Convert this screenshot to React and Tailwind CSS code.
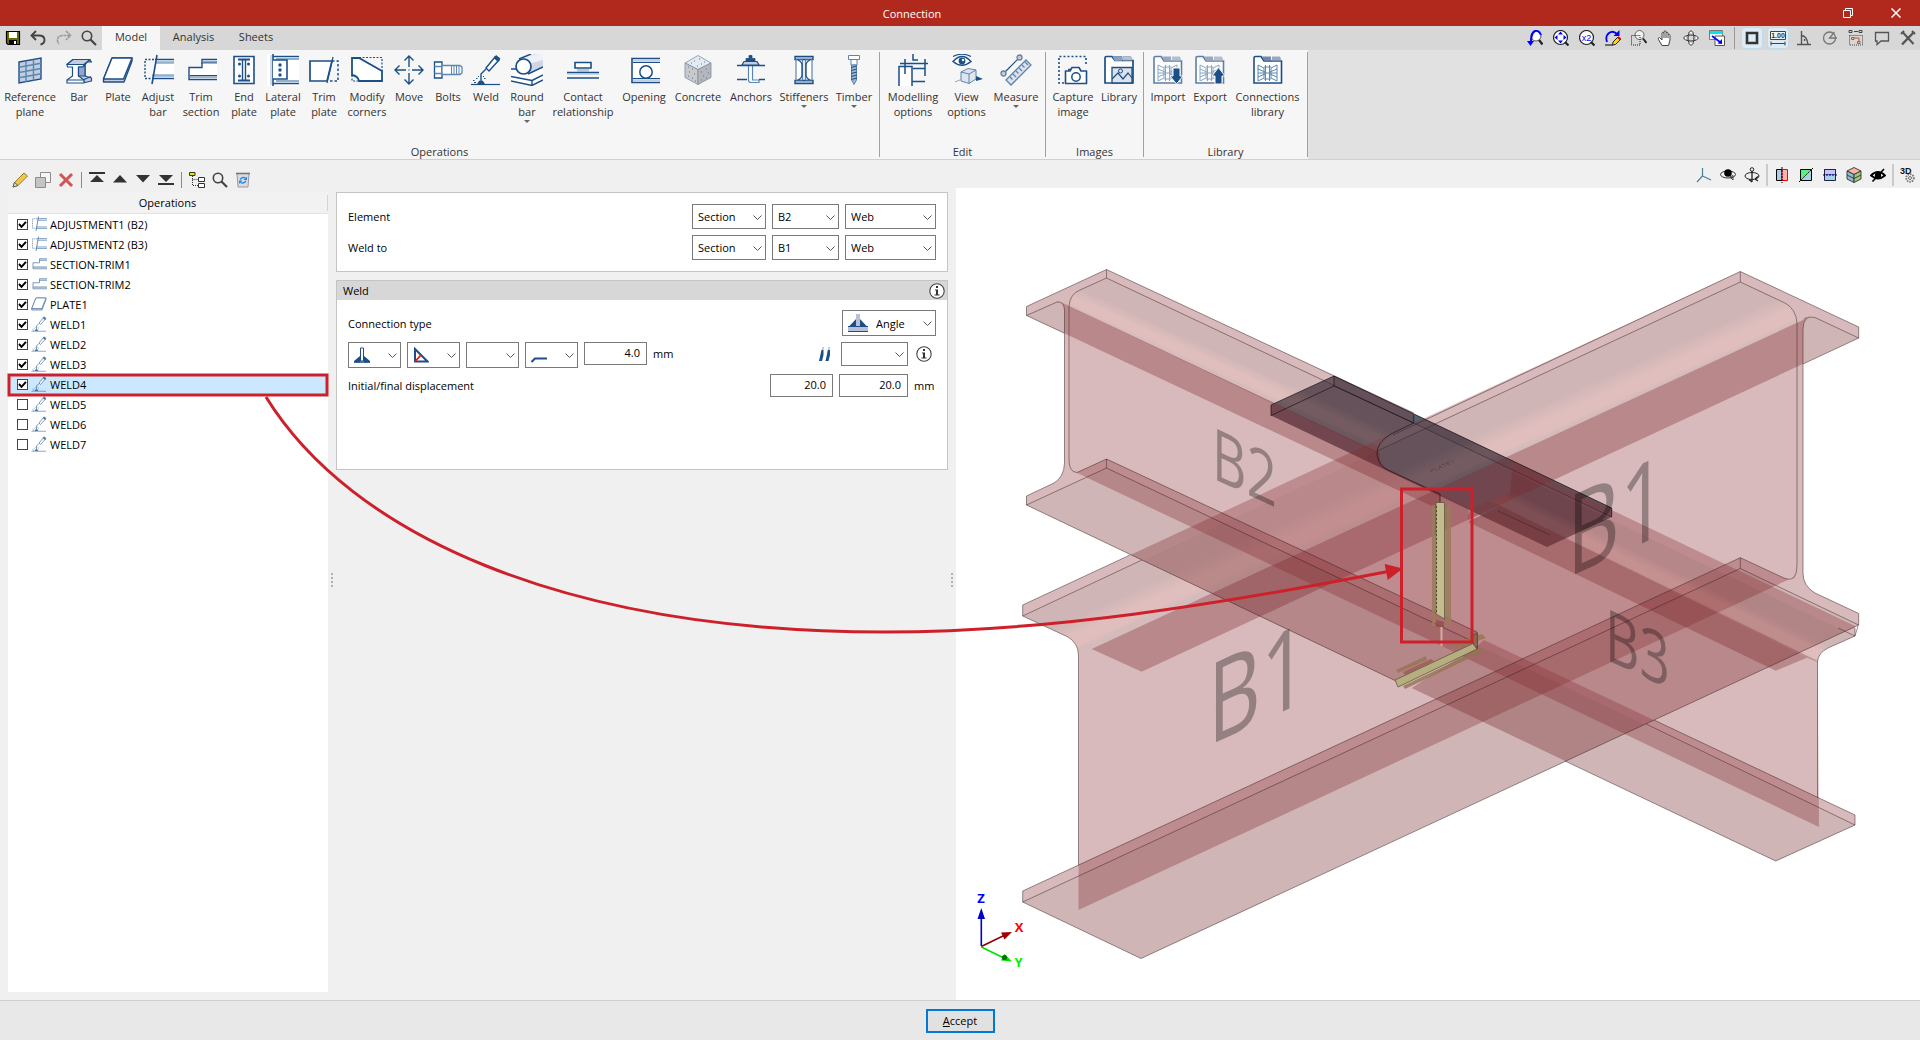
import React from "react";

const NAVY = "#1c4f87";
const MID = "#5b86b0";
const PALE = "#c3cde0";

function Svg({ box = 16, size = "size-4", children, className = "" }) {
  return (
    <svg viewBox={`0 0 ${box} ${box}`} className={`${size} shrink-0 ${className}`} fill="none" aria-hidden="true">
      {children}
    </svg>
  );
}

/* ---------- ribbon drawings, all on a 32 x 32 grid ---------- */

const art = {
  refPlane: (
    <g stroke={MID} strokeWidth="1.4">
      <path d="M5 8 27 4V25L5 29Z" fill={PALE} stroke={NAVY} />
      <path d="M12 7V28M19.500 5.500V26.500M5 13.300 27 9.300M5 18.500 27 14.500M5 23.700 27 19.700" />
    </g>
  ),
  bar: (
    <g stroke={NAVY} strokeWidth="1.200" strokeLinejoin="round">
      <path d="M10 5.500H26L28.500 8H24L22 11V22L28.500 24V27L22 28.500 15 22V13Z" fill={PALE} />
      <path d="M4 10.500 10 5.500H27L21 10.500 20 13H15.500V22L21 26V29H4V26L9.500 22V13H4.500Z" fill="#fff" />
      <path d="M10 5.500H27L21 10.500H4Z" fill={PALE} />
      <path d="M15.500 13H20L22 10V22L15.500 22Z" fill="#93a8c8" />
      <path d="M4 26H20M20 26 28 22.500" />
    </g>
  ),
  plate: (
    <g stroke={NAVY} strokeWidth="1.400" strokeLinejoin="round">
      <path d="M1.500 25 10 4H30V7L22 28H1.500Z" fill={PALE} />
      <path d="M1.500 25 10 4H30L21.500 25Z" fill="#fff" />
    </g>
  ),
  adjust: (
    <g stroke={NAVY}>
      <path d="M13 6H32V26H9Z" fill="#fff" stroke="none" />
      <path d="M13 5.500H32M10 24.500H32" stroke={NAVY} strokeWidth="1.600" />
      <path d="M13 8.500H32M10 21.500H32" stroke="#8fb0cf" strokeWidth="2.500" />
      <path d="M15 1 10 30" strokeWidth="1.600" />
      <path d="M12 5.500H3V24.500H9" strokeDasharray="2 1.500" strokeWidth="1.400" />
    </g>
  ),
  trimSection: (
    <g>
      <path d="M4 14H16V6H32V26H4Z" fill="#fff" />
      <path d="M16 9H32M4 23H32" stroke="#9db9d6" strokeWidth="2" />
      <path d="M32 5.500H17V13.500H4V25.500H32" stroke={NAVY} strokeWidth="1.400" />
      <path d="M18 8H32M5 21.500H32" stroke={NAVY} strokeWidth="1" />
    </g>
  ),
  endPlate: (
    <g stroke={NAVY}>
      <path d="M6 2.500H26V29.500H6Z" fill="#fff" strokeWidth="1.600" />
      <path d="M10 5.500H22M10 26.500H22" strokeWidth="2" />
      <path d="M14.500 6V26M17.500 6V26" strokeWidth="1.400" />
      <g fill={NAVY} stroke="none">
        <circle cx="11.500" cy="10" r="1.500" /><circle cx="20.500" cy="10" r="1.500" />
        <circle cx="11.500" cy="22" r="1.500" /><circle cx="20.500" cy="22" r="1.500" />
      </g>
    </g>
  ),
  lateral: (
    <g stroke={NAVY}>
      <path d="M0 0H32V32H0Z" fill="#fff" stroke="none" />
      <path d="M6 0V32" strokeWidth="1.600" />
      <path d="M4 1V31" stroke="#9db9d6" />
      <path d="M6 2.500H32M6 29.500H32" strokeWidth="1.600" />
      <path d="M9 5H32M9 27H32" stroke="#8fb0cf" strokeWidth="2" />
      <path d="M6 6H20V25H6" fill="#fff" strokeWidth="1.600" />
      <g fill={NAVY} stroke="none"><circle cx="13" cy="11" r="1.700" /><circle cx="13" cy="16" r="1.700" /><circle cx="13" cy="21" r="1.700" /></g>
    </g>
  ),
  trimPlate: (
    <g stroke={NAVY}>
      <path d="M2 7H24L19 27H2Z" fill="#fff" strokeWidth="1.700" />
      <path d="M25 3 19 29" strokeWidth="1.200" />
      <path d="M24 7H30V27H21" strokeDasharray="2.500 2" strokeWidth="1.500" />
    </g>
  ),
  corners: (
    <g stroke={NAVY}>
      <path d="M1 4H8L31 17V27H8Q7 22 1 21Z" fill="#fff" strokeWidth="1.800" />
      <path d="M8 3.500H31V17M1 21V27H8" strokeDasharray="2 1.500" strokeWidth="1.200" />
    </g>
  ),
  move: (
    <g stroke={NAVY} strokeWidth="1.400">
      <path d="M16 2V13M16 19V30M2 16H13M19 16H30M11.500 6.500 16 2 20.500 6.500M11.500 25.500 16 30 20.500 25.500M6.500 11.500 2 16 6.500 20.500M25.500 11.500 30 16 25.500 20.500" />
      <path d="M16 15V17M15 16H17" stroke="#9db9d6" />
    </g>
  ),
  bolts: (
    <g stroke={NAVY} strokeWidth="1.300">
      <path d="M2.500 8H10V24H2.500Z" fill="#fff" />
      <path d="M2.500 12.500H10M2.500 19.500H10" stroke={MID} />
      <path d="M10 11.500H28L30 13V19L28 20.500H10Z" fill="#fff" stroke={MID} />
      <path d="M19.500 12V20M22 12V20M24.500 12V20M27 12V20" stroke={MID} strokeWidth="1" />
    </g>
  ),
  weld: (
    <g stroke={NAVY}>
      <path d="M1 30.500H30" strokeWidth="1.200" />
      <path d="M16 14 25 3 29 6 19 17Z" fill="#fff" strokeWidth="1.400" />
      <path d="M24 4 26 1.500 30 4.500 28 7.500Z" fill={NAVY} strokeWidth=".8" />
      <path d="M16 15 11 20V26" strokeWidth="1.400" />
      <path d="M7 30 9 27 11 26 13 27 15 30Z" fill={NAVY} stroke="none" />
      <path d="M3 26.500H4.500M6 24.500H7.500M14 24.500H15.500M4 28.500H6M8 22.500H9M13 22.500H14" strokeWidth="1.200" />
    </g>
  ),
  roundBar: (
    <g stroke={NAVY} strokeLinejoin="round">
      <path d="M0 15H32L32 25 21 31 0 27Z" fill="#fff" stroke="none" />
      <path d="M10 5 24 0H32V14L16 20Z" fill="#cfd6e4" stroke="none" />
      <path d="M14 3 28 0H32V6L18 10Z" fill="#eef1f7" stroke="none" />
      <path d="M8 5 20 0M17 20 32 13" strokeWidth="1.400" />
      <circle cx="12.500" cy="12.500" r="7.500" fill="#fff" strokeWidth="1.700" />
      <path d="M0 15H5M0 22.500 21 26.500 32 21M0 27 21 31.500 32 26M21 26.500V31" strokeWidth="1.400" />
    </g>
  ),
  contact: (
    <g stroke={NAVY}>
      <path d="M8 8.500H24V14H8Z" fill="#fff" strokeWidth="1.600" />
      <path d="M11 15V17.500M13 15V17.500M15 15V17.500M17 15V17.500M19 15V17.500M21 15V17.500" stroke={MID} strokeWidth=".8" />
      <path d="M0 18.500H32M0 24H32" strokeWidth="1.600" />
      <path d="M0 20H32" stroke="#9db9d6" strokeWidth="1" />
    </g>
  ),
  opening: (
    <g stroke={NAVY}>
      <path d="M4 4.500H32V28.500H4Z" fill="#fff" stroke="none" />
      <path d="M32 4.500H4V28.500H32" strokeWidth="1.600" />
      <path d="M5 6.500H32M5 26.500H32" stroke={PALE} strokeWidth="2.500" />
      <path d="M5 8.500H32M5 24.500H32" strokeWidth="1.200" />
      <circle cx="18" cy="18" r="6.200" strokeWidth="1.500" />
    </g>
  ),
  concrete: (
    <g stroke="#7890aa" strokeWidth=".8" strokeLinejoin="round">
      <path d="M16 1.500 29 9 16 15.500 3 9Z" fill="#e4eaf2" />
      <path d="M3 9 16 15.500V30.500L3 23.500Z" fill="#c9c9cc" />
      <path d="M29 9 16 15.500V30.500L29 23.500Z" fill="#b5b6ba" />
      <path d="M6 13h1M10 15h1M7 18h1M12 20h1M6 22h1M10 24h1M13 27h1M19 18h1M24 15h1M21 22h1M26 19h1M19 26h1M24 24h1M12 7h1M17 5h1M19 10h1M22 8h1M9 9h1M15 12h1" stroke="#5d7590" strokeWidth="1" />
    </g>
  ),
  anchors: (
    <g stroke={NAVY}>
      <path d="M13.500 11V26Q13.500 28.500 16 28.500H24V26H17.500V11Z" fill="#fff" stroke={MID} strokeWidth="1.200" />
      <path d="M2 11.500H30M2 25.500H12M24 25.500H30" strokeWidth="1.400" />
      <path d="M7 11 9 7.500H22L24 11Z" fill={PALE} strokeWidth="1.200" />
      <path d="M11 4.500H20V7.500H11ZM14 1.500H17V4H14Z" fill={NAVY} strokeWidth=".8" />
    </g>
  ),
  stiffeners: (
    <g stroke={NAVY}>
      <path d="M7 2.500H25V5.500H7ZM7 26.500H25V29.500H7Z" fill={PALE} strokeWidth="1.400" />
      <path d="M8 6H14.500V26H8ZM17.500 6H24V26H17.500Z" fill="#fff" stroke={MID} strokeWidth="1.200" />
      <path d="M10 6Q14 8 14 11V21Q14 24 10 26M22 6Q18 8 18 11V21Q18 24 22 26" strokeWidth="1.300" />
    </g>
  ),
  timber: (
    <g stroke={MID} strokeWidth="1">
      <path d="M10.500 1.500H21.500V5.500H10.500ZM13 5.500H19V11H13Z" fill="#fff" />
      <path d="M13.500 11H18.500V26L16 30.500 13.500 26Z" fill="#9db4d0" />
      <path d="M13 13.500 19 12M13 16.500 19 15M13 19.500 19 18M13 22.500 19 21M13 25.500 19 24" stroke={NAVY} />
    </g>
  ),
  modelling: (
    <g stroke={NAVY} strokeWidth="1.500">
      <path d="M2 13H15V32H2Z" fill="#fff" stroke="none" />
      <path d="M2 32V12.500H15V32M3 9.500H31M16 14.500H28M15 27.500H28M8 5V20M28 5V22M16 0V6H21" />
    </g>
  ),
  viewOptions: (
    <g stroke={NAVY}>
      <path d="M2 7.500Q11-2.500 20 7.500 11 15 2 7.500Z" fill="#fff" strokeWidth="1.400" />
      <circle cx="11" cy="7" r="3.400" fill={NAVY} stroke="none" /><circle cx="12" cy="6" r="1.200" fill="#fff" stroke="none" />
      <path d="M2 2.500Q11-2 20 2.500" strokeWidth="1.200" />
      <path d="M10 18 17 14.500 25 16V25L18 29.500 10 27Z" fill="#dfe4ee" stroke={MID} strokeWidth="1" />
      <path d="M10 18 18 20 25 16M18 20V29.500" stroke={MID} />
      <path d="M25 22 32 25 25 27Z" fill={NAVY} stroke="none" /><path d="M4 28 10 25.500" stroke="#9aa8b8" />
    </g>
  ),
  measure: (
    <g stroke={MID} strokeWidth="1.300">
      <path d="M6 26 26 6 31 11 11 31Z" fill="#dde2ec" />
      <path d="M10 23 12.500 25.500M13 20 16 23M16 17 18.500 19.500M19 14 22 17M22 11 24.500 13.500M25 8 28 11" />
      <path d="M4.500 18.500 18.500 4.500" stroke={NAVY} strokeWidth="1.200" />
      <circle cx="3.500" cy="19.500" r="2.500" fill={PALE} stroke="#6d8099" /><circle cx="19.500" cy="3.500" r="2.500" fill={PALE} stroke="#6d8099" />
    </g>
  ),
  capture: (
    <g stroke={NAVY}>
      <path d="M7 29H2V2.500H29V12" strokeWidth="1.600" strokeDasharray="2 2" />
      <path d="M8.500 17H13L15 13.500H22L24 17H29.500V29.500H8.500Z" fill="#fff" strokeWidth="1.600" strokeLinejoin="round" />
      <circle cx="19" cy="23" r="4.200" strokeWidth="1.500" />
      <path d="M11 15.500H13" strokeWidth="1.500" />
    </g>
  ),
  library: (
    <g stroke={NAVY}>
      <path d="M2 29V4Q2 2.500 3.500 2.500H9L12 6.500H30V29Z" fill="#fff" strokeWidth="1.700" />
      <path d="M10 2.500H19V6.500H12Z" fill="#8ba0c4" stroke="#7f95bb" /><path d="M20 2.500H27Q29 2.500 29 6H20Z" fill="#b9c2d2" stroke="#a5b0c4" />
      <path d="M9 13.500H29V29H9Z" fill="#dde2ec" strokeWidth="1.300" />
      <path d="M9 25 15 19 20 25 25 19 29 24" strokeWidth="1.200" /><circle cx="17.500" cy="17" r="2" />
    </g>
  ),
  folder: (
    <g>
      <path d="M2 29V4Q2 2.500 3.500 2.500H9L12 7H29.500V29Z" fill="#fff" stroke={NAVY} strokeWidth="1.600" />
      <path d="M10 2.500H19V6.500H12Z" fill="#7387ad" /><path d="M20 2.500H27Q29 2.500 29 6.500H20Z" fill="#9aa7c0" />
      <path d="M6 11 12 14V24L6 27ZM25 11 19 14V24L25 27ZM6 19H25M13.500 11V27M17.500 11V27M6 15 13 18M6 23 13 20M25 15 18 18M25 23 18 20M12 13H19M12 25H19" stroke={MID} strokeWidth="1" />
    </g>
  ),
};
art.importLib = (
  <g>
    <g opacity=".7">{art.folder}</g>
    <path d="M21 14H28V22H31L24.500 30 18 22H21Z" fill={NAVY} stroke="#f6f6f6" />
  </g>
);
art.exportLib = (
  <g>
    <g opacity=".7">{art.folder}</g>
    <path d="M21 30H28V22H31L24.500 13.500 18 22H21Z" fill={NAVY} stroke="#f6f6f6" />
  </g>
);

const groups = [
  {
    name: "Operations",
    items: [
      ["refPlane", "Reference", "plane", "w-[60px]"],
      ["bar", "Bar", "", "w-[38px]"],
      ["plate", "Plate", "", "w-[40px]"],
      ["adjust", "Adjust", "bar", "w-[40px]"],
      ["trimSection", "Trim", "section", "w-[46px]"],
      ["endPlate", "End", "plate", "w-[40px]"],
      ["lateral", "Lateral", "plate", "w-[38px]"],
      ["trimPlate", "Trim", "plate", "w-[44px]"],
      ["corners", "Modify", "corners", "w-[42px]"],
      ["move", "Move", "", "w-[42px]"],
      ["bolts", "Bolts", "", "w-[36px]"],
      ["weld", "Weld", "", "w-[40px]"],
      ["roundBar", "Round", "bar", "w-[42px]", true],
      ["contact", "Contact", "relationship", "w-[70px]"],
      ["opening", "Opening", "", "w-[52px]"],
      ["concrete", "Concrete", "", "w-[56px]"],
      ["anchors", "Anchors", "", "w-[50px]"],
      ["stiffeners", "Stiffeners", "", "w-[56px]", true],
      ["timber", "Timber", "", "w-[44px] mr-[3px]", true],
    ],
  },
  {
    name: "Edit",
    items: [
      ["modelling", "Modelling", "options", "w-[66px]"],
      ["viewOptions", "View", "options", "w-[41px]"],
      ["measure", "Measure", "", "w-[58px]", true],
    ],
  },
  {
    name: "Images",
    items: [
      ["capture", "Capture", "image", "w-[54px]"],
      ["library", "Library", "", "w-[38px] mr-[5px]"],
    ],
  },
  {
    name: "Library",
    items: [
      ["importLib", "Import", "", "w-[48px]"],
      ["exportLib", "Export", "", "w-[36px]"],
      ["folder", "Connections", "library", "w-[79px]"],
    ],
  },
];

function Ribbon() {
  return (
    <div className="flex h-[110px] border-b border-[#d0d0d0] bg-[#e1e1e1]">
      {groups.map((g) => (
        <section key={g.name} aria-label={g.name} className="flex flex-col bg-[#f6f6f6]">
          <div className="mt-0.5 flex h-[105px] flex-col justify-between border-r border-[#a0a0a0]">
            <div className="flex pt-0.5">
              {g.items.map(([icon, a, b, w, menu]) => (
                <button key={icon} type="button" className={`flex ${w} flex-col items-center whitespace-nowrap leading-[15px]`}>
                  <Svg box={32} size="size-8" className="mb-[3px]">{art[icon]}</Svg>
                  <span>{a}</span>
                  {b && <span>{b}</span>}
                  {menu && <span className="mt-px border-x-[3px] border-t-[3px] border-x-transparent border-t-[#666]" />}
                </button>
              ))}
            </div>
            <div className="text-center leading-[10px]">{g.name}</div>
          </div>
        </section>
      ))}
    </div>
  );
}

/* ---------- small tool icons ---------- */

const lens = (
  <g>
    <circle cx="7.500" cy="7.500" r="7" fill="#fff" stroke="#222" strokeWidth="1.200" />
    <path d="M12 12 15.500 15.500" stroke="#222" strokeWidth="2.200" />
  </g>
);
const searchArt = (
  <g stroke="#444">
    <circle cx="6" cy="6" r="4.700" strokeWidth="1.600" />
    <path d="M9.500 9.500 15 15" strokeWidth="2.200" />
  </g>
);

const quick = [
  ["Save", <g key="a"><path d="M1.500 1.500H14.500V14.500H3L1.500 13Z" fill="#6b6b00" stroke="#000" strokeWidth="1.200" /><path d="M4 2H12V8H4Z" fill="#fff" /><path d="M4 10H12V14H4Z" fill="#000" /><path d="M9 11H11V14H9Z" fill="#fff" /></g>],
  ["Undo", <path key="a" d="M6 1 1.500 5.500 6 10M2 5.500H9Q14.500 5.500 14.500 10 14.500 13.500 10.500 14.500" stroke="#444" strokeWidth="1.900" />],
  ["Redo", <path key="a" d="M10 1 14.500 5.500 10 10M14 5.500H7Q1.500 5.500 1.500 10 1.500 12.500 3 14" stroke="#9c9c9c" strokeWidth="1.700" strokeDasharray="3 .6" />],
  ["Find", searchArt],
];

const viewTools = [
  ["Previous view", <g key="a"><circle cx="9" cy="6" r="5" fill="#fff" stroke="#555" /><path d="M12 10 15.500 14.500" stroke="#222" strokeWidth="2.200" /><path d="M14 5Q12 0 8 1 4 3 4 12" stroke="#00f" strokeWidth="2" /><path d="M0 11H7L3.500 16Z" fill="#00f" /></g>],
  ["Zoom all", <g key="a">{lens}<path d="M7.500 1.500 10 4.500H5ZM7.500 13.500 10 10.500H5ZM1.500 7.500 4.500 5V10ZM13.500 7.500 10.500 5V10Z" fill="#00f" /></g>],
  ["Zoom x2", <g key="a">{lens}<text x="7.500" y="10.500" textAnchor="middle" fontSize="9" fill="#00f" fontFamily="Liberation Sans, sans-serif">x2</text></g>],
  ["Redraw", <g key="a"><path d="M2 12Q0 6 4 3 8 0 12 4" stroke="#00f" strokeWidth="1.800" /><path d="M14.500 0V6H8.500Z" fill="#00f" /><path d="M0 15H8" stroke="#000" /><path d="M8 12 13 7 15.500 9.500 10.500 14.500 7.500 15Z" fill="#ffd800" stroke="#222" /><path d="M13 7 15.500 9.500" stroke="#c00" strokeWidth="2" /></g>],
  ["Zoom window", <g key="a"><circle cx="8.500" cy="5" r="4.500" fill="#f2f2f2" stroke="#666" /><path d="M12 8.500 15.500 13" stroke="#222" strokeWidth="2" /><path d="M.5 5.500H9V15H.5Z" stroke="#00f" strokeDasharray="1 1" /></g>],
  ["Pan", <path key="a" d="M5 15.500 1.500 9.500Q.5 8 2.500 7.500L5 10V3Q5.500 1.500 7 3V1.500Q8 0 9 1.500V2.500Q10.500 1.500 11 3V4.500Q12.500 3.500 13 5.500V10L11.500 15.500ZM7 3V8M9 2.500V8M11 4.500V8" fill="#fff" stroke="#444" strokeWidth="1" />],
  ["Orbit", <g key="a" stroke="#333"><ellipse cx="8" cy="8" rx="6.500" ry="3" /><ellipse cx="8" cy="8" rx="3" ry="6.500" /><path d="M5.500 3 8 .5 10.500 3M5.500 13 8 15.500 10.500 13M3 5.500.5 8 3 10.500M13 5.500 15.500 8 13 10.500" fill="#fff" /></g>],
  ["Views", <g key="a"><path d="M.5.5H13.500V9.500H.5Z" fill="#fff" stroke="#777" /><path d="M1 1H13.500V4H1Z" fill="#00e5ee" /><path d="M6 6H15.500V15.500H6Z" fill="#fff" stroke="#555" /><path d="M3 6 11 12" stroke="#00f" strokeWidth="1.600" /><path d="M13 14V9L8.500 13.500Z" fill="#00f" /></g>],
];

const drawTools = [
  ["Frame", <path key="a" d="M3 3H13V13H3Z" stroke="#333" strokeWidth="2.600" />, true],
  ["Units", <g key="a" stroke="#444"><path d="M.5 1.500H15.500V9.500H.5Z" fill="#f4f4f4" /><text x="8" y="8" textAnchor="middle" fontSize="7" fontWeight="700" fill="#333" stroke="none" fontFamily="Liberation Sans, sans-serif">1.00</text><path d="M1 13.500H15M1 11.500V15.500M15 11.500V15.500" /></g>, true],
  ["Right angle", <path key="a" d="M1 14.500H15M5.500 1V14.500M5.500 5.500Q11 6 12 14.500M8.500 9V11" stroke="#555" strokeWidth="1.400" />],
  ["Polar", <g key="a" stroke="#777" strokeWidth="1.300"><circle cx="7.500" cy="8" r="6" /><path d="M15 8H7.500L12.500 2" /></g>],
  ["Object snap", <g key="a" stroke="#444"><path d="M1 .5H4V2.500H1ZM6 1.500H10M11 .5H14V2.500H11Z" /><path d="M1.500 5.500H14.500V15H1.500Z" strokeDasharray="1 1" /><path d="M3.500 7.500H6V9.500H3.500ZM6 8H11V11M9.500 11.500H12V13.500H9.500Z" stroke="#c8501e" /></g>],
  ["Comment", <path key="a" d="M1.500 2.500H14.500V11H7L3 14.500V11H1.500Z" stroke="#555" strokeWidth="1.300" />],
  ["Settings", <g key="a"><path d="M2 14.500 13.500 2.500" stroke="#555" strokeWidth="2.400" /><path d="M2.500 2 13.500 14" stroke="#555" strokeWidth="2" /><path d="M12 1 15 4M1 4 4 1" stroke="#555" strokeWidth="2" /></g>],
];

const listTools = [
  [
    ["Edit", <g key="a" strokeWidth=".9"><path d="M1 15 2.500 10.500 12 1 15.500 4 6 13.500Z" fill="#f2c744" stroke="#8a6d2a" /><path d="M1 15 2.500 10.500 6 13.500Z" fill="#e9e1d0" stroke="#555" /></g>],
    ["Copy", <g key="a" stroke="#8c8c8c"><path d="M5.500.5H15.500V10.500H5.500Z" fill="#f6f6f6" /><path d="M.5 5.500H10.500V15.500H.5Z" fill="#c4c4c4" /></g>],
    ["Delete", <path key="a" d="M2 2 14 14M14 2 2 14" stroke="#d25353" strokeWidth="3" />],
  ],
  [
    ["Move to top", <g key="a" fill="#333"><path d="M0 0H16V2H0ZM8 3 15 10H1Z" /></g>],
    ["Move up", <path key="a" d="M8 3 15 10.500H1Z" fill="#333" />],
    ["Move down", <path key="a" d="M8 10.500 15 3H1Z" fill="#333" />],
    ["Move to bottom", <g key="a" fill="#333"><path d="M0 11H16V13H0ZM8 10 15 3H1Z" /></g>],
  ],
  [
    ["Tree", <g key="a" stroke="#333"><path d="M3.500 4V13.500H9M3.500 7.500H9" strokeDasharray="1 1" /><path d="M.5.500H6V3.500H.5Z" fill="#e8e800" /><path d="M9.500 5.500H15.500V9.500H9.500ZM9.500 11.500H15.500V15.500H9.500Z" fill="#fff" /></g>],
    ["Search", searchArt],
    ["Purge", <g key="a"><path d="M2 1.500H14L13 15H3Z" fill="#dcdcdc" stroke="#999" /><path d="M1 1.500H15" stroke="#777" strokeWidth="1.600" /><path d="M5 7.500Q8 4 10.500 6.500M11 9Q8 12.500 5.500 10" stroke="#1e88ff" strokeWidth="1.300" /><path d="M12 4.500V8H8.500ZM4 12V8.500H7.500Z" fill="#1e88ff" /></g>],
  ],
];

const sceneTools = [
  [
    ["Axes", <path key="a" d="M6.500 1V9L1 15M6.500 9 15 13" stroke="#4c8096" strokeWidth="1.200" />],
    ["Look", <g key="a" stroke="#333"><ellipse cx="8" cy="7.500" rx="7.500" ry="3.500" /><circle cx="8" cy="6" r="3.800" fill="#000" stroke="none" /><path d="M10 10 13 8.500V13M10 10 13 13" strokeWidth=".9" /></g>],
    ["Turn", <g key="a" stroke="#222"><ellipse cx="8" cy="9" rx="7" ry="3.500" /><path d="M8 4V15M5 12.500 8 15M11 12 14 9.500M11 12 14 14" strokeWidth="1.300" /><circle cx="8" cy="2.500" r="1.800" /></g>],
  ],
  [
    ["Section X", <g key="a"><path d="M2.500 2.500H8V13.500H2.500Z" fill="#a8d0e6" stroke="#000" /><path d="M8 2.500H13.500V13.500H8Z" fill="#ffb0b0" stroke="#f00" /><path d="M8 0V16" stroke="#000" strokeDasharray="2 1" /></g>],
    ["Section Y", <g key="a"><path d="M2.500 2.500H13.500V13.500H2.500Z" fill="#a8d0e6" /><path d="M2.500 2.500H13.500L2.500 13.500Z" fill="#5cf07a" /><path d="M2.500 2.500H13.500V13.500H2.500Z" stroke="#000" /><path d="M1 15 15 1" stroke="#000" strokeDasharray="2 1" /></g>],
    ["Section Z", <g key="a"><path d="M2.500 2.500H13.500V8H2.500Z" fill="#c4c4ff" stroke="#00a" /><path d="M2.500 8H13.500V13.500H2.500Z" fill="#a8d0e6" /><path d="M2.500 2.500H13.500V13.500H2.500Z" stroke="#224" /><path d="M1 8H15" stroke="#000" strokeDasharray="2 1" /></g>],
    ["Layers", <g key="a" stroke="#333" strokeWidth=".9"><path d="M8 .5 15 4 8 7.500 1 4Z" fill="#f7b5a5" /><path d="M1 4 8 7.500V15.500L1 12Z" fill="#8dbbd0" /><path d="M15 4 8 7.500V15.500L15 12Z" fill="#9fc77a" /><path d="M1 8 8 11.500 15 8" /></g>],
    ["Hide", <g key="a"><path d="M1 8.500Q8 1.500 15 8.500 8 14.500 1 8.500Z" fill="#fff" stroke="#000" strokeWidth="1.800" /><circle cx="8" cy="8.500" r="3.200" fill="#000" /><path d="M2.500 14.500 14 2" stroke="#000" strokeWidth="1.600" /></g>],
  ],
  [
    ["3D settings", <g key="a"><circle cx="10" cy="11" r="3.800" fill="#eee" stroke="#777" strokeWidth="1.800" strokeDasharray="1.500 1" /><circle cx="10" cy="11" r="1.500" stroke="#777" /><text x="0" y="6.500" fontSize="9" fontWeight="700" fill="#111" fontFamily="Liberation Sans, sans-serif">3D</text></g>],
  ],
];

function ToolButton({ label, children, active = false, className = "" }) {
  return (
    <button
      type="button"
      aria-label={label}
      className={`flex items-center justify-center ${active ? "rounded border border-[#c3dbe9] bg-[#dcebf5]" : ""} ${className}`}
    >
      <Svg>{children}</Svg>
    </button>
  );
}

/* ---------- operations list ---------- */

const operations = [
  ["ADJUSTMENT1 (B2)", "adjust", true],
  ["ADJUSTMENT2 (B3)", "adjust", true],
  ["SECTION-TRIM1", "trimSection", true],
  ["SECTION-TRIM2", "trimSection", true],
  ["PLATE1", "plate", true],
  ["WELD1", "weld", true],
  ["WELD2", "weld", true],
  ["WELD3", "weld", true],
  ["WELD4", "weld", true],
  ["WELD5", "weld", false],
  ["WELD6", "weld", false],
  ["WELD7", "weld", false],
];

function OperationsPanel() {
  return (
    <aside className="flex w-[328px] shrink-0 flex-col">
      <div className="flex h-8 items-start pt-3 pl-3">
        {listTools.map((set, i) => (
          <React.Fragment key={i}>
            {i > 0 && <span className="mx-[7px] h-4 w-px bg-[#8a8a8a]" />}
            <div className="flex gap-[7px]">
              {set.map(([label, d]) => <ToolButton key={label} label={label}>{d}</ToolButton>)}
            </div>
          </React.Fragment>
        ))}
      </div>
      <div className="mb-2 ml-2 flex flex-1 flex-col bg-white">
        <div className="flex h-[22px] items-center justify-center border-b border-[#e2e2e2] bg-[#f2f2f2]">
          <span className="flex-1 text-center text-black">Operations</span>
          <span className="h-4 w-px bg-[#d4d4d4]" />
        </div>
        <ul className="text-black">
          {operations.map(([name, icon, on]) => (
            <li key={name} className={name === "WELD4" ? "bg-[#cce8ff]" : ""}>
              <label className="flex h-5 items-center pl-[9px]">
                <span className="relative flex size-[11px]">
                  <input type="checkbox" defaultChecked={on} className="peer size-[11px] appearance-none border border-[#444] bg-white" />
                  <svg viewBox="0 0 11 11" className="pointer-events-none absolute inset-0 hidden size-[11px] peer-checked:block" fill="none" aria-hidden="true">
                    <path d="M2 5 4.500 7.800 9 2.800" stroke="#000" strokeWidth="2" />
                  </svg>
                </span>
                <Svg box={32} className="mx-[3px] opacity-80">{art[icon]}</Svg>
                {name}
              </label>
            </li>
          ))}
        </ul>
      </div>
    </aside>
  );
}

function Splitter() {
  return (
    <div className="flex w-2 shrink-0 flex-col items-center justify-center gap-0.5">
      {[0, 1, 2, 3].map((n) => <span key={n} className="size-0.5 bg-[#b0b0b0]" />)}
    </div>
  );
}

/* ---------- form ---------- */

function Select({ label, value = "", className = "", icon }) {
  return (
    <span className={`relative flex shrink-0 ${className}`}>
      <select
        aria-label={label}
        className={`h-full w-full appearance-none border border-[#7a7a7a] bg-white pr-4 text-black ${icon && value ? "pl-[33px]" : "pl-[5px]"}`}
      >
        <option>{value}</option>
      </select>
      {icon && <span className="pointer-events-none absolute inset-y-0 left-1.5 flex items-center">{icon}</span>}
      <svg viewBox="0 0 9 5" className="pointer-events-none absolute top-1/2 right-1 -mt-0.5 h-[5px] w-[9px]" fill="none" aria-hidden="true">
        <path d="M.5.5 4.500 4.500 8.500.5" stroke="#555" />
      </svg>
    </span>
  );
}

function Info() {
  return (
    <button type="button" aria-label="Information">
      <Svg>
        <circle cx="8" cy="8" r="7.200" fill="#fff" stroke="#444" strokeWidth="1.100" />
        <path d="M7 3H9V5H7ZM6 6.500H9V11.500H10.500V12.500H5.500V11.500H7V7.500H6Z" fill="#333" />
      </Svg>
    </button>
  );
}

const bead = (
  <Svg>
    <path d="M6.500 1H9.500V14H6.500Z" fill="#fff" stroke={NAVY} />
    <path d="M0 15.500V14L6 9V15.500ZM16 15.500V14L10 9V15.500Z" fill={NAVY} />
    <path d="M0 15H16" stroke={NAVY} strokeWidth="1.500" />
  </Svg>
);
const angleIcon = (
  <Svg box={20} size="size-5">
    <path d="M8 1H12V14H8Z" fill="#b7c0d6" />
    <path d="M1 13.500 8 6V13.500ZM19 13.500 12 6V13.500Z" fill={NAVY} />
    <path d="M0 14H20V18H0Z" fill="#b7c0d6" /><path d="M0 13.500H20M0 18.500H20" stroke={NAVY} />
  </Svg>
);
const filletIcon = (
  <Svg>
    <path d="M2 2V14.500H14.500Z" stroke={NAVY} strokeWidth="2" />
    <path d="M2 14.500 8 8" stroke="#e11" strokeWidth="1.800" />
  </Svg>
);
const contourIcon = (
  <Svg><path d="M.5 15 4 11.500H16" stroke={NAVY} strokeWidth="2" /></Svg>
);

function NumberBox({ label, value, className }) {
  return (
    <input
      type="text"
      aria-label={label}
      defaultValue={value}
      className={`h-[23px] border border-[#7a7a7a] bg-white pr-1.5 pb-0.5 text-right text-black ${className}`}
    />
  );
}

function FormPanel() {
  return (
    <main className="w-[612px] shrink-0 pt-8 text-black">
      <section className="flex flex-col gap-1.5 border border-[#c4c4c4] bg-white px-[11px] py-[11px]">
        {[["Element", "B2"], ["Weld to", "B1"]].map(([label, bar]) => (
          <div key={label} className="flex h-[25px] items-center gap-1.5">
            <span className="flex-1">{label}</span>
            <Select label={`${label} kind`} value="Section" className="h-[25px] w-[74px]" />
            <Select label={`${label} bar`} value={bar} className="h-[25px] w-[67px]" />
            <Select label={`${label} part`} value="Web" className="h-[25px] w-[91px]" />
          </div>
        ))}
      </section>

      <section className="mt-2 min-h-[190px] border border-[#c4c4c4] bg-white">
        <h2 className="flex h-[19px] items-center justify-between bg-[#d7d7d7] pr-0.5 pl-1.5">
          Weld
          <Info />
        </h2>
        <div className="flex flex-col gap-1.5 px-[11px] pt-2.5">
          <div className="flex h-[26px] items-center justify-between">
            <span>Connection type</span>
            <Select label="Connection type" value="Angle" className="h-[26px] w-[94px]" icon={angleIcon} />
          </div>
          <div className="flex h-[26px] items-start gap-1.5">
            <Select label="Weld shape" className="h-[26px] w-[53px]" icon={bead} />
            <Select label="Throat" className="h-[26px] w-[53px]" icon={filletIcon} />
            <Select label="Finish" className="h-[26px] w-[53px]" />
            <Select label="Contour" className="h-[26px] w-[53px]" icon={contourIcon} />
            <NumberBox label="Throat thickness" value="4.0" className="w-[63px]" />
            <span className="flex-1 leading-6">mm</span>
            <span className="flex h-6 items-center gap-2">
              <Svg>
                <path d="M4.500 7 6.500 1M10.500 7 12.500 1" stroke="#a9c4da" strokeWidth="1.500" />
                <path d="M2 15 4.500 4H6.500V9L5 15ZM8.500 15 11 4H13V9L11.500 15Z" fill={NAVY} />
              </Svg>
              <Select label="Electrode" className="h-6 w-[67px]" />
              <span className="mr-1 flex"><Info /></span>
            </span>
          </div>
          <div className="flex h-[23px] items-center gap-1.5">
            <span className="flex-1">Initial/final displacement</span>
            <NumberBox label="Initial displacement" value="20.0" className="w-[63px]" />
            <NumberBox label="Final displacement" value="20.0" className="w-[69px]" />
            <span className="w-[22px]">mm</span>
          </div>
        </div>
      </section>
    </main>
  );
}

/* ---------- 3D model ---------- */

const WEB = "rgb(138 48 54 / 0.333)";
const DARK = "rgb(114 33 36 / 0.333)";

function Stops() {
  return (
    <>
      <stop offset="0" stopColor="rgb(114 33 36)" stopOpacity=".333" />
      <stop offset=".5" stopColor="rgb(114 33 36)" stopOpacity=".333" />
      <stop offset=".75" stopColor="rgb(159 60 57)" stopOpacity=".333" />
      <stop offset=".93" stopColor="rgb(159 60 57)" stopOpacity=".333" />
      <stop offset="1" stopColor="rgb(130 50 52)" stopOpacity=".333" />
    </>
  );
}

function Scene() {
  return (
    <svg viewBox="956 188 964 812" className="block h-0 w-full flex-1" preserveAspectRatio="xMidYMid meet" role="img" aria-label="Connection model">
      <defs>
        <linearGradient id="g1" gradientUnits="userSpaceOnUse" x1="1740" y1="282" x2="1765" y2="337"><Stops /></linearGradient>
        <linearGradient id="g2" gradientUnits="userSpaceOnUse" x1="1106" y1="278" x2="1089" y2="315"><Stops /></linearGradient>
        <linearGradient id="g3" gradientUnits="userSpaceOnUse" x1="1673" y1="548" x2="1656" y2="583"><Stops /></linearGradient>
      </defs>

      {/* plate */}
      <path d="M1271 405 1334 376 1611.700 508V517L1547 547 1271 415.500Z" fill="#5f6b75" />
      <path d="M1334 376 1611.700 508V517L1334 386Z" fill="#52616d" />

      {/* continuous beam */}
      <path d="M1022.700 605 1740.300 271.500V282L1022.700 616Z" fill={WEB} />
      <path d="M1022.700 616 1740.300 282 1785 303Q1796 309 1797 323L1091.700 649 1078.500 655Q1078 643 1068 637Z" fill="url(#g1)" />
      <path d="M1091.700 649 1803 320Q1804 315 1815 317.500L1858.700 338 1141.700 671.700Z" fill={DARK} />
      <path d="M1078.500 655 1797 323V565Q1797 580 1790 579L1078.500 910Z" fill={WEB} />
      <path d="M1740.300 271.500 1858.700 327V338L1815 317.500Q1803 314 1803 330V573Q1803 586 1815 593L1858.700 613.500V625L1740.300 568.500V557.700L1785 578.500Q1797 583 1797 565V323Q1796 309 1785 303L1740.300 282Z" fill={WEB} />
      <path d="M1022.700 891 1740.300 557.700V568.500L1022.700 902Z" fill={WEB} />
      <path d="M1022.700 902 1740.300 568.500 1858.700 625 1141 958.500Z" fill={DARK} />

      {/* beam B2 */}
      <path d="M1106.500 269.500 1413.700 413V423L1106.500 278Z" fill={WEB} />
      <path d="M1106.500 278 1413.700 423 1391 434Q1376 443 1377 453L1069 306Q1070 294 1080 290Z" fill="url(#g2)" />
      <path d="M1026.500 315.500 1058 301.500 1065 304 1380 453Q1378 464 1388 470L1440 494V510Z" fill={DARK} />
      <path d="M1069 306 1380 453Q1378 464 1388 470L1440 494V645L1076.700 472.700Q1069 472 1069 460Z" fill={WEB} />
      <path d="M1026.500 306.500 1106.500 269.500V278L1080 290Q1070 294 1069 306V460Q1069 472 1077 472.500L1106.500 459V468L1026.500 505V496L1054 483Q1064 477 1064.500 463V310Q1064 301 1057 302L1026.500 315.500Z" fill={WEB} />
      <path d="M1106.500 459 1477 632V643L1106.500 468Z" fill={WEB} />
      <path d="M1026.500 505 1106.500 468 1477 643 1396 681Z" fill={DARK} />

      {/* beam B3 */}
      <path d="M1515 464 1855 626V636L1512 472Z" fill={WEB} />
      <path d="M1512 472 1855 636 1828 648Q1818 653 1817.500 662L1807 657.700 1500 506 1468 520Q1468 510 1475 507L1510 493Z" fill="url(#g3)" />
      <path d="M1468 522 1500 506 1807 657.700 1775.700 670.700Z" fill={DARK} />
      <path d="M1440 494 1468 507 1470 520 1500 506 1817.700 661 1819 827 1470 660 1440 645Z" fill={WEB} />
      <path d="M1484 640 1855 815V825L1478 645Z" fill={WEB} />
      <path d="M1478 645 1855 825 1775.700 861 1411.700 688Z" fill={DARK} />

      {/* edges */}
      <g fill="none" stroke="#3a2224" strokeOpacity=".5" strokeWidth="1">
        <path d="M1022.700 605 1130 555M1393 435 1740.300 271.500 1858.700 327V338L1815 317.500Q1803 314 1803 330V573Q1803 586 1815 593L1858.700 613.500V625L1740.300 568.500V557.700L1785 578.500Q1797 583 1797 565V323Q1796 309 1785 303L1740.300 282V271.500M1740.300 282 1377 451M1858.700 338 1803 364" />
        <path d="M1022.700 605V616L1142 560M1022.700 616 1068 637Q1078 643 1078.500 655V865" />
        <path d="M1022.700 891 1740.300 557.700M1740.300 568.500 1022.700 902V891M1022.700 902 1141 958.500 1858.700 625" />
        <path d="M1413.700 413 1106.500 269.500 1026.500 306.500V315.500L1057 302Q1064 301 1064.500 310V463Q1064 477 1054 483L1026.500 496V505L1106.500 468V459L1077 472.500Q1069 472 1069 460V306Q1070 294 1080 290L1106.500 278V269.500M1106.500 278 1413.700 423M1026.500 315.500 1064 333M1026.500 505 1396 681" />
        <path d="M1106.500 459 1477 632V648M1106.500 468 1474 642" />
        <path d="M1855 628V636L1828 648Q1818 653 1817.500 662V798M1858 626 1855 636M1855 636 1838 628M1654 720 1855 815V825L1775.700 861 1565 761M1646 724 1855 825" />
      </g>
      <g fill="none" stroke="#1c1215" strokeOpacity=".7" strokeWidth="1">
        <path d="M1271 405 1334 376 1611.700 508V517M1271 405V415.500L1334 386V376M1334 386 1413.700 423V415M1413.700 423 1391 434Q1376 443 1377 455 1379 466 1388 470L1440 494V502" />
        <path d="M1611.700 517 1413.700 423M1498 511 1550 535" strokeOpacity=".35" />
      </g>

      {/* beam names, drawn in the plane of each web */}
      <g fill="#000" fillOpacity=".31" fontFamily="Open Sans, Noto Sans, sans-serif">
        <text transform="matrix(.74 .345 0 1 1212 478)" fontSize="72">B2</text>
        <text transform="matrix(.74 .345 0 1 1605 659)" fontSize="72">B3</text>
        <text transform="matrix(.73 -.335 0 1 1208 746)" fontSize="112">B1</text>
        <text transform="matrix(.73 -.335 0 1 1567 578)" fontSize="112">B1</text>
        <text transform="matrix(.9 -.4 .4 .5 1431 473)" fontSize="8">PLATE1</text>
      </g>

      {/* welds */}
      <g>
        <path d="M1432 505H1435V626H1432ZM1445.500 507 1451 505V622L1445 628Z" fill="#9c7a5c" fillOpacity=".85" />
        <path d="M1436 502.500H1444.500V619L1436 614Z" fill="#c4bc8d" stroke="#5c5a3c" strokeWidth=".8" />
        <path d="M1436.500 506V612" stroke="#4d4a30" strokeDasharray="2 2" />
        <path d="M1436 620 1444 622V627H1436Z" fill="#8e4c42" fillOpacity=".7" />
        <path d="M1441.500 627V646" stroke="#d7a9a8" strokeWidth="2" />
        <path d="M1396 670 1426 656 1427 660 1398 673ZM1448 645 1482 634 1486 638 1460 647ZM1403 686 1482 648 1487 650 1405 689Z" fill="#957451" fillOpacity=".8" />
        <path d="M1403 672 1431 659 1434 661 1405 675Z" fill="#944a41" fillOpacity=".6" />
        <path d="M1395 680 1473 643.500 1477 649 1398 687Z" fill="#b7ae80" stroke="#5c5a3c" strokeWidth=".8" />
        <path d="M1471 636 1477.500 633V649L1473 643Z" fill="#7a5a45" fillOpacity=".5" stroke="#4d4a30" strokeWidth=".8" />
      </g>

      {/* axis triad */}
      <g strokeWidth="1.600">
        <path d="M981.300 946V915" stroke="#0000c8" /><path d="M981.300 908 985 919H977.500Z" fill="#0000c8" />
        <path d="M981.300 946.500 1005 935" stroke="#8b0000" /><path d="M1012 932 1001 932.500 1004.500 939.500Z" fill="#a00000" />
        <path d="M981.300 947 1005 958.500" stroke="#00e000" /><path d="M1012 961.500 1001 960.500 1004.500 954Z" fill="#00e000" /><circle cx="1004.500" cy="957.500" r="2.600" fill="#007800" />
      </g>
      <g fontSize="13" fontWeight="700" textAnchor="middle" fontFamily="Open Sans, Noto Sans, sans-serif">
        <text x="981" y="903" fill="#0000ff">Z</text>
        <text x="1019" y="932" fill="#ff0000">X</text>
        <text x="1018.500" y="967" fill="#00f000">Y</text>
      </g>
    </svg>
  );
}

function Callout() {
  return (
    <svg viewBox="0 0 1920 1040" className="pointer-events-none absolute inset-0 h-full w-full" fill="none" stroke="#ce202b" strokeWidth="3" aria-hidden="true">
      <rect x="9" y="375" width="318" height="20" />
      <rect x="1401.500" y="489" width="70.500" height="153" />
      <path d="M266 397C350 533 560 632 885 632C1050 632 1220 604 1388 571.500" />
      <path d="M1403 568.500 1384.700 564 1387.700 580Z" fill="#ce202b" stroke="none" />
    </svg>
  );
}

export default function App() {
  return (
    <div className="relative flex min-h-screen flex-col bg-[#f0f0f0] font-['Open_Sans','Noto_Sans',sans-serif] text-[11px] leading-[15px] text-[#333]">
      <header className="flex h-[26px] items-center bg-[#b1291d] text-white">
        <h1 className="flex-1 text-center">Connection</h1>
        <button type="button" aria-label="Restore" className="flex w-12 justify-center">
          <svg viewBox="0 0 10 10" className="size-2.5" fill="none" stroke="#fff" aria-hidden="true"><path d="M.5 2.500H7.500V9.500H.5ZM2.500 2.500V.5H9.500V7.500H7.500" /></svg>
        </button>
        <button type="button" aria-label="Close" className="flex w-12 justify-center">
          <svg viewBox="0 0 10 10" className="size-2.5" fill="none" stroke="#fff" strokeWidth="1.500" aria-hidden="true"><path d="M.5.5 9.500 9.500M9.500.5.5 9.500" /></svg>
        </button>
      </header>

      <nav className="flex h-6 bg-[#d7d7d7]">
        <div className="grid w-[102px] grid-cols-4">
          {quick.map(([label, d]) => <ToolButton key={label} label={label}>{d}</ToolButton>)}
        </div>
        <button type="button" className="w-[58px] bg-[#f6f6f6] pb-1">Model</button>
        <button type="button" className="w-[67px] pb-1">Analysis</button>
        <button type="button" className="w-[58px] pb-1">Sheets</button>
        <div className="ml-auto flex items-center pr-px">
          <div className="flex gap-1">
            {viewTools.map(([label, d]) => <ToolButton key={label} label={label} className="size-[22px]">{d}</ToolButton>)}
          </div>
          <span className="mx-1.5 h-[22px] w-px bg-[#999]" />
          <div className="flex gap-1">
            {drawTools.map(([label, d, on]) => <ToolButton key={label} label={label} active={on} className="size-[22px]">{d}</ToolButton>)}
          </div>
        </div>
      </nav>

      <Ribbon />

      <div className="flex flex-1">
        <OperationsPanel />
        <Splitter />
        <FormPanel />
        <Splitter />
        <section className="flex min-w-0 flex-1 flex-col">
          <div className="flex h-7 items-center justify-end pt-0.5 pr-1">
            {sceneTools.map((set, i) => (
              <React.Fragment key={i}>
                {i > 0 && <span className="mx-1.5 h-[22px] w-0.5 bg-[#cacaca]" />}
                <div className="flex gap-2">
                  {set.map(([label, d]) => <ToolButton key={label} label={label}>{d}</ToolButton>)}
                </div>
              </React.Fragment>
            ))}
          </div>
          <div className="flex flex-1 flex-col bg-white"><Scene /></div>
        </section>
      </div>

      <footer className="flex h-10 items-center justify-center border-t border-[#d0d0d0] bg-[#e8e8e8]">
        <button type="button" className="h-6 w-[69px] border-2 border-[#0078d7] bg-[#e1e1e1] text-black"><u>A</u>ccept</button>
      </footer>
      <Callout />
    </div>
  );
}
